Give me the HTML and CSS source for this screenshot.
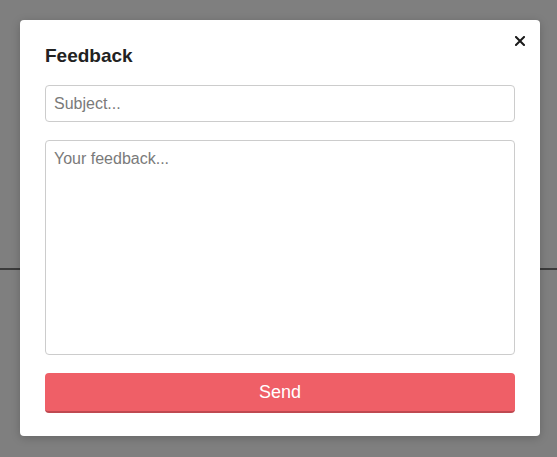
FILE: index.html
```html
<!DOCTYPE html>
<html lang="en">

<head>
  <link rel="stylesheet" href="styles.css">
</head>

<body>
  <div class="page">
    <div class="page-top"></div>
  </div>

  <div class="overlay">
    <div class="modal">
      <button class="close" aria-label="Close">
        <svg viewBox="0 0 10 10" width="10" height="10">
          <path d="M1 1L9 9M9 1L1 9" stroke="currentColor" stroke-width="2" stroke-linecap="square" />
        </svg>
      </button>
      <h3>Feedback</h3>
      <form class="feedback-form">
        <input type="text" placeholder="Subject..." />
        <textarea placeholder="Your feedback..."></textarea>
        <button type="button" class="send">Send</button>
      </form>
    </div>
  </div>
</body>

</html>
```

FILE: styles.css
```css
:root {
  --overlay: #7f7f7f;
  --line: #3b3b3b;
  --card: #ffffff;
  --text: #222222;
  --placeholder: #7a7a7a;
  --border: #cccccc;
  --primary: #ef5f67;
  --primary-edge: #bf4951;
  --radius: 4px;
}

* {
  box-sizing: border-box;
  margin: 0;
  padding: 0;
}

body {
  width: 557px;
  height: 457px;
  font-family: 'Liberation Sans', Arial, sans-serif;
  background-color: var(--overlay);
  color: var(--text);
  position: relative;
  overflow: hidden;
}

.page-top {
  height: 270px;
  border-bottom: 2px solid var(--line);
}

.overlay {
  position: absolute;
  inset: 0;
  padding: 20px;
}

.modal {
  position: relative;
  width: 520px;
  background: var(--card);
  border-radius: var(--radius);
  box-shadow: 0 2px 10px rgba(0, 0, 0, 0.2);
  padding: 25px 25px 23px;
}

h3 {
  font-size: 19px;
  font-weight: 700;
  line-height: 22px;
  margin-bottom: 18px;
}

.close {
  position: absolute;
  top: 16px;
  right: 15px;
  width: 10px;
  height: 10px;
  background: none;
  border: none;
  color: #1a1a1a;
  cursor: pointer;
  display: flex;
}

.feedback-form {
  display: flex;
  flex-direction: column;
  gap: 18px;
}

input,
textarea {
  width: 100%;
  font-family: inherit;
  font-size: 16px;
  color: var(--text);
  border: 1px solid var(--border);
  border-radius: var(--radius);
  padding: 8px 8px;
  background: var(--card);
  outline: none;
}

input {
  height: 37px;
}

textarea {
  height: 215px;
  resize: none;
  padding-top: 9px;
}

input::placeholder,
textarea::placeholder {
  color: var(--placeholder);
}

.send {
  height: 40px;
  width: 100%;
  background-color: var(--primary);
  color: #ffffff;
  border: none;
  border-bottom: 2px solid var(--primary-edge);
  border-radius: var(--radius);
  font-family: inherit;
  font-size: 18px;
  cursor: pointer;
}
```
